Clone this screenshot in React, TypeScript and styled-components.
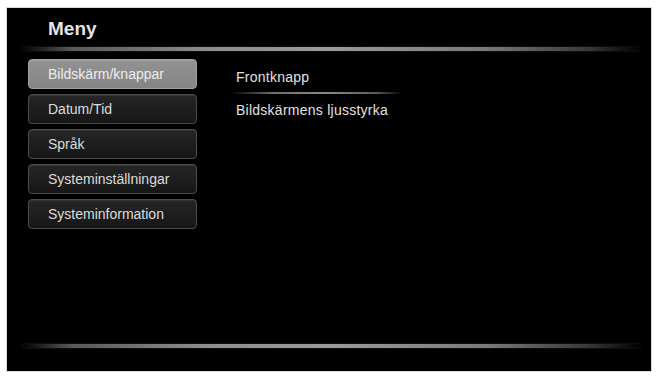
import React from 'react';
import styled, {createGlobalStyle} from 'styled-components';

const GlobalStyle = createGlobalStyle`
  html, body {
    margin: 0;
    padding: 0;
    background: #ffffff;
  }
  body {
    font-family: "Liberation Sans", Arial, sans-serif;
  }
`

const Page = styled.div`
  width: 656px;
  height: 376px;
  padding: 7px 4px 4px 6px;
  box-sizing: border-box;
`

const Screen = styled.div`
  width: 646px;
  height: 365px;
  background: #000;
  border: 1px solid #d8d8d8;
  box-sizing: border-box;
  display: flex;
  flex-direction: column;
`

const Header = styled.div`
  height: 39px;
  padding: 11px 0 0 41px;
  box-sizing: border-box;
`

const Title = styled.div`
  font-size: 19px;
  font-weight: 700;
  color: #e4e4e4;
  line-height: 20px;
`

const Rule = styled.div`
  height: 4px;
  margin: 0 11px 0 15px;
  border-radius: 2px;
  background: linear-gradient(90deg,
    rgba(120, 120, 120, 0) 0%,
    rgba(110, 110, 110, 0.8) 8%,
    #8e8e8e 30%,
    #9a9a9a 50%,
    #7a7a7a 75%,
    rgba(90, 90, 90, 0.6) 92%,
    rgba(80, 80, 80, 0) 100%);
  box-shadow: 0 0 2px rgba(140, 140, 140, 0.35);
`

const Body = styled.div`
  flex: 1;
  display: flex;
  padding: 8px 0 0 21px;
  gap: 33px;
`

const Menu = styled.div`
  width: 169px;
  display: flex;
  flex-direction: column;
  gap: 5px;
`

const MenuButton = styled.div<{ $active?: boolean }>`
  height: 30px;
  box-sizing: border-box;
  border-radius: 4px;
  padding-left: 19px;
  display: flex;
  align-items: center;
  font-size: 14px;
  color: ${p => p.$active ? '#ededed' : '#dcdcdc'};
  background: ${p => p.$active
    ? 'linear-gradient(180deg, #929292 0%, #858585 100%)'
    : 'linear-gradient(180deg, #262626 0%, #161616 100%)'};
  border: 1px solid ${p => p.$active ? '#a0a0a0' : '#4c4c4c'};
  box-shadow: inset 0 1px 1px ${p => p.$active ? 'rgba(255,255,255,0.15)' : 'rgba(255,255,255,0.08)'};
`

const Options = styled.div`
  width: 178px;
  padding-top: 2px;
  display: flex;
  flex-direction: column;
`

const Option = styled.div`
  height: 31px;
  padding-left: 6px;
  display: flex;
  align-items: center;
  font-size: 14px;
  letter-spacing: 0.25px;
  color: #e2e2e2;
`

const OptionDivider = styled.div`
  height: 2px;
  width: 173px;
  background: linear-gradient(90deg,
    rgba(100, 100, 100, 0) 0%,
    #6e6e6e 25%,
    #8a8a8a 55%,
    #5a5a5a 85%,
    rgba(80, 80, 80, 0) 100%);
`

const BottomRule = styled(Rule)`
  margin-bottom: 23px;
`

const menuItems = [
    'Bildskärm/knappar',
    'Datum/Tid',
    'Språk',
    'Systeminställningar',
    'Systeminformation',
];

function App() {
    return (
        <Page>
            <GlobalStyle/>
            <Screen>
                <Header>
                    <Title>Meny</Title>
                </Header>
                <Rule/>
                <Body>
                    <Menu>
                        {menuItems.map((item, i) => (
                            <MenuButton key={item} $active={i === 0}>{item}</MenuButton>
                        ))}
                    </Menu>
                    <Options>
                        <Option>Frontknapp</Option>
                        <OptionDivider/>
                        <Option>Bildskärmens ljusstyrka</Option>
                    </Options>
                </Body>
                <BottomRule/>
            </Screen>
        </Page>
    )
}

export default App;
